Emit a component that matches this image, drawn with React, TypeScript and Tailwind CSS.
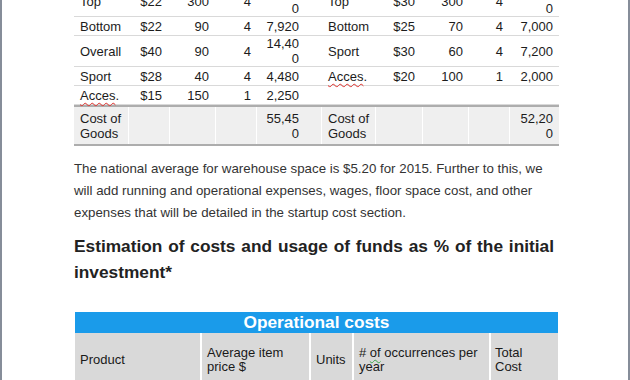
import React from "react";

const ROW =
  "grid grid-cols-[54px_41px_46px_41px_65px_54px_47px_46px_41px_50px] items-center min-h-[19px] border-b border-[#d9d9d9]";

function Lines({ t }: { t: string }) {
  return (
    <>
      {t.split("|").map((p, i) => (
        <span key={i} className="block">
          {p}
        </span>
      ))}
    </>
  );
}

function Label({ t }: { t: string }) {
  if (t === "Acces.") {
    return (
      <span>
        <span className="underline decoration-wavy decoration-[#e0302c] decoration-1 underline-offset-[2px]">
          Acces
        </span>
        .
      </span>
    );
  }
  return <span>{t}</span>;
}

type R = string[];

function DataRow({ l, r }: { l: R; r: R }) {
  return (
    <div className={ROW}>
      <div className="pl-[6px]">
        <Label t={l[0]} />
      </div>
      <div className="pr-[7px] text-right">{l[1]}</div>
      <div className="pr-[6px] text-right">{l[2]}</div>
      <div className="pr-[5px] text-right">{l[3]}</div>
      <div className="pr-[22px] text-right">
        <Lines t={l[4]} />
      </div>
      <div className="pl-[7px]">
        <Label t={r[0]} />
      </div>
      <div className="pr-[7px] text-right">{r[1]}</div>
      <div className="pr-[5px] text-right">{r[2]}</div>
      <div className="pr-[6px] text-right">{r[3]}</div>
      <div className="pr-[6px] text-right">
        <Lines t={r[4]} />
      </div>
    </div>
  );
}

const rows: { l: R; r: R }[] = [
  { l: ["Top", "$22", "300", "4", "26,40|0"], r: ["Top", "$30", "300", "4", "36,00|0"] },
  { l: ["Bottom", "$22", "90", "4", "7,920"], r: ["Bottom", "$25", "70", "4", "7,000"] },
  { l: ["Overall", "$40", "90", "4", "14,40|0"], r: ["Sport", "$30", "60", "4", "7,200"] },
  { l: ["Sport", "$28", "40", "4", "4,480"], r: ["Acces.", "$20", "100", "1", "2,000"] },
  { l: ["Acces.", "$15", "150", "1", "2,250"], r: ["", "", "", "", ""] },
];

export default function App() {
  return (
    <div className="w-[630px] h-[380px] overflow-hidden bg-white border-x-2 border-[#868d99] font-['Liberation_Sans',Arial,sans-serif] text-[13px] leading-[15px] text-[#1c1c1c]">
      <div className="pl-[72px] mt-[-14px]">
        <div className="w-[485px]">
          {rows.map((row, i) => (
            <DataRow key={i} l={row.l} r={row.r} />
          ))}
          <div className="grid grid-cols-[54px_41px_46px_41px_65px_54px_47px_46px_41px_50px] bg-[#efefef] border-y-2 border-[#adadad]">
            <div className="pl-[6px] pt-[4px] pb-[3px]">
              Cost of
              <br />
              Goods
            </div>
            <div className="border-l border-white" />
            <div className="border-l border-white" />
            <div className="border-l border-white" />
            <div className="border-l border-white pr-[22px] pt-[4px] pb-[3px] text-right">
              55,45
              <br />0
            </div>
            <div className="border-l border-white pl-[6px] pt-[4px] pb-[3px]">
              Cost of
              <br />
              Goods
            </div>
            <div className="border-l border-white" />
            <div className="border-l border-white" />
            <div className="border-l border-white" />
            <div className="border-l border-white pr-[6px] pt-[4px] pb-[3px] text-right">
              52,20
              <br />0
            </div>
          </div>
        </div>

        <p className="mt-[12px] w-[485px] text-[13.3px] leading-[22px] text-[#333333]">
          The national average for warehouse space is $5.20 for 2015. Further to this, we will add running and
          operational expenses, wages, floor space cost, and other expenses that will be detailed in the startup cost
          section.
        </p>

        <h2 className="mt-[9px] w-[480px] text-[17.3px] font-bold leading-[26px] text-justify text-[#222222]">
          Estimation of costs and usage of funds as % of the initial investment*
        </h2>

        <div className="mt-[27px] ml-[1px] w-[483px]">
          <div className="h-[21px] bg-[#1a9bea] text-center text-[17.3px] font-bold leading-[21px] text-white">
            Operational costs
          </div>
          <div className="grid grid-cols-[125px_109px_43px_137px_69px] bg-[#d9d9d9] leading-[14px] text-[#1a1a1a]">
            <div className="flex items-center pl-[5px] py-[13px]">Product</div>
            <div className="flex items-center border-l-2 border-white pl-[5px] py-[13px]">
              Average item
              <br />
              price $
            </div>
            <div className="flex items-center border-l-2 border-white pl-[5px] py-[13px]">Units</div>
            <div className="flex items-center border-l-2 border-white pl-[5px] py-[13px]">
              <span>
                #{" "}
                <span className="underline decoration-wavy decoration-[#3aa84a] decoration-1 underline-offset-[2px]">
                  of
                </span>{" "}
                occurrences per
                <br />
                year
              </span>
            </div>
            <div className="flex items-center border-l-2 border-white pl-[4px] py-[13px]">
              <span>
                Total
                <br />
                Cost
              </span>
            </div>
          </div>
        </div>
      </div>
    </div>
  );
}
